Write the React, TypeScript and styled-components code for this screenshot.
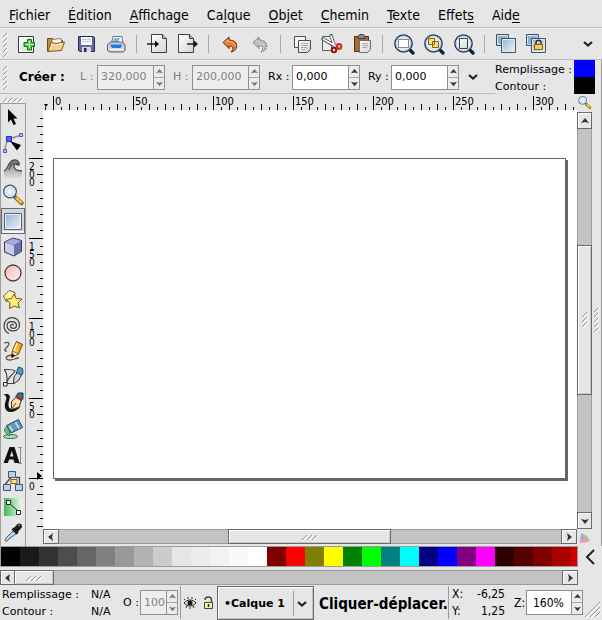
import React, { useLayoutEffect, useRef, useState } from "react";
import styled, { createGlobalStyle, css } from "styled-components";

const sans = `"DejaVu Sans", Verdana, sans-serif`;
const narrow = `"DejaVu Sans Condensed", "DejaVu Sans", sans-serif`;
const bg = "#e6e6e6";
const line = "#9c9c9c";
const soft = "#bcbcbc";

const Global = createGlobalStyle`
  *, *::before, *::after { box-sizing: border-box; }
  html, body { margin: 0; background: ${bg}; }
  body { font: 11px/16px ${sans}; color: #000; }
  button, input { font: inherit; color: inherit; margin: 0; padding: 0; border: 0; background: none; border-radius: 0; }
  svg { display: block; flex: none; }
`;

const Window = styled.div`
  display: flex;
  flex-direction: column;
  height: 100vh;
  min-height: 620px;
  overflow: hidden;
  background: ${bg};
`;

const MenuBar = styled.nav`
  display: flex;
  height: 28px;
  padding-top: 2px;
  border-bottom: 1px solid ${soft};
`;
const MenuItem = styled.button`
  padding: 0 9px;
  font: 14px/26px ${narrow};
  white-space: nowrap;
  u { text-underline-offset: 2px; }
`;

const CommandBar = styled.div`
  display: flex;
  align-items: center;
  height: 32px;
  border-top: 1px solid #f2f2f2;
  border-bottom: 1px solid ${soft};
`;
const Command = styled.button`
  display: flex;
  justify-content: center;
  width: 30px;
  height: 24px;
`;
const Divider = styled.span`
  width: 1px;
  height: 18px;
  margin: 0 6px 0 5px;
  background: #aaa;
`;
const Spacer = styled.span`
  flex: 1;
`;

const ControlRow = styled.div`
  display: flex;
  height: 34px;
`;
const ControlBar = styled.div`
  display: flex;
  align-items: center;
  flex: 1;
  min-width: 0;
  border-top: 1px solid #f2f2f2;
  border-bottom: 1px solid ${soft};
`;
const Heading = styled.strong`
  width: 61px;
  margin-left: 8px;
  font: bold 12px/16px ${sans};
`;
const Label = styled.label<{ $w: number; $dim?: boolean }>`
  width: ${(p) => p.$w}px;
  flex: none;
  color: ${(p) => (p.$dim ? "#808080" : "#000")};
  white-space: nowrap;
`;
const SpinFrame = styled.div<{ $w: number; $dim?: boolean }>`
  display: flex;
  flex: none;
  width: ${(p) => p.$w}px;
  height: 25px;
  border: 1px solid #8f8f8f;
  color: ${(p) => (p.$dim ? "#808080" : "#000")};
  background: ${(p) => (p.$dim ? "#eeeeee" : "#fff")};
`;
const SpinInput = styled.input<{ $narrow?: boolean }>`
  flex: 1;
  min-width: 0;
  padding-left: 3px;
  ${(p) => p.$narrow && css`font: 12px/16px ${narrow}; padding-left: 6px;`}
`;
const SpinButtons = styled.div`
  display: flex;
  flex-direction: column;
  width: 11px;
  border-left: 1px solid #8f8f8f;
  background: #ececec;
`;
const SpinButton = styled.button`
  display: flex;
  flex: 1;
  align-items: center;
  justify-content: center;
  & + & { border-top: 1px solid #a8a8a8; }
`;
const More = styled.button`
  display: flex;
  align-items: center;
  justify-content: center;
  width: 28px;
  height: 24px;
`;
const StylePanel = styled.div`
  display: flex;
  border-right: 1px solid ${line};
  padding-right: 6px;
`;
const StyleNames = styled.div`
  width: 79px;
  padding-top: 1px;
  line-height: 17px;
  white-space: nowrap;
`;
const StyleSwatches = styled.div`
  display: flex;
  flex-direction: column;
  width: 21px;
`;
const StyleSwatch = styled.button<{ $c: string }>`
  flex: 1;
  background: ${(p) => p.$c};
`;

const Main = styled.main`
  display: flex;
  flex: 1;
  min-height: 0;
`;
const Toolbox = styled.div`
  display: flex;
  flex-direction: column;
  flex: none;
  width: 26px;
`;
const ToolHandle = styled.div`
  height: 9px;
  padding: 3px 0 0 2px;
`;
const ToolList = styled.div`
  display: flex;
  flex-direction: column;
  flex: 1;
  border: 1px solid ${line};
  border-bottom: 0;
`;
const Tool = styled.button<{ $on?: boolean }>`
  display: flex;
  align-items: center;
  justify-content: center;
  flex: none;
  height: 26px;
  ${(p) => p.$on && css`
    background: #d4d4d4;
    box-shadow: inset 0 0 0 1px #6a6a6a, inset 0 -2px 0 1px #f6f6f6;
  `}
`;
const Workspace = styled.div`
  display: grid;
  flex: 1;
  min-width: 0;
  grid-template-columns: 17px minmax(0, 1fr) 15px;
  grid-template-rows: 16px minmax(0, 1fr) 17px;
`;
const Corner = styled.button`
  display: flex;
  align-items: center;
  justify-content: center;
`;
const RulerBox = styled.div`
  min-width: 0;
  min-height: 0;
  overflow: hidden;
  svg { width: 100%; height: 100%; }
`;
const RulerText = styled.text<{ $small?: boolean }>`
  font: ${(p) => (p.$small ? 10 : 11)}px ${narrow};
`;
const Canvas = styled.div`
  display: flex;
  padding: 48px 11px 50px 10px;
  background: #fff;
`;
const Page = styled.div`
  flex: 1;
  border: 1px solid #666;
  background: #fff;
  box-shadow: 2px 2px 0 #666;
`;
const Dock = styled.div`
  display: flex;
  align-items: center;
  justify-content: center;
  width: 10px;
  border-right: 1px solid ${line};
`;

const Track = styled.div<{ $v?: boolean }>`
  display: flex;
  flex-direction: ${(p) => (p.$v ? "column" : "row")};
  ${(p) => (p.$v ? "width: 15px; margin-top: 2px;" : "height: 15px;")}
  min-width: 0;
  border: 1px solid ${line};
  background: #c3c3c3;
`;
const TrackEnd = styled.button<{ $v?: boolean }>`
  display: flex;
  align-items: center;
  justify-content: center;
  flex: none;
  ${(p) => (p.$v ? "height: 15px;" : "width: 14px;")}
  background: ${bg};
  box-shadow: 0 0 0 1px #6a6a6a, inset 1px 1px 0 #fff;
`;
const Gap = styled.span<{ $n: number }>`
  flex: ${(p) => p.$n} 0 0;
`;
const Thumb = styled.button<{ $n: number }>`
  display: flex;
  align-items: center;
  justify-content: center;
  flex: ${(p) => p.$n} 0 0;
  background: ${bg};
  box-shadow: 0 0 0 1px #6a6a6a, inset 1px 1px 0 #fff, inset -1px -1px 0 #c9c9c9;
`;

const PaletteArea = styled.div`
  display: grid;
  flex: none;
  grid-template-columns: minmax(0, 1fr) 24px;
  row-gap: 3px;
`;
const Palette = styled.div`
  display: flex;
  height: 21px;
  overflow: hidden;
  border: 1px solid ${line};
`;
const Swatch = styled.button<{ $c: string }>`
  flex: none;
  width: 19px;
  background: ${(p) => p.$c};
`;

const Status = styled.footer`
  display: flex;
  align-items: center;
  flex: none;
  height: 35px;
`;
const StyleStatus = styled.dl`
  display: grid;
  grid-template-columns: 89px 32px;
  flex: none;
  margin: 0;
  padding: 1px 0 0 2px;
  line-height: 17px;
  white-space: nowrap;
  dd { margin: 0; }
`;
const StatusRule = styled.span`
  flex: none;
  width: 1px;
  height: 33px;
  background: ${line};
`;
const LayerIcons = styled.div`
  display: flex;
  align-items: center;
  flex: none;
  margin-left: 2px;
`;
const IconButton = styled.button`
  display: flex;
  align-items: center;
  justify-content: center;
  flex: none;
  width: 18px;
  height: 24px;
`;
const LayerButton = styled.button`
  display: flex;
  align-items: center;
  flex: none;
  width: 97px;
  height: 34px;
  padding: 2px 6px 0;
  border: 1px solid #6a6a6a;
  box-shadow: inset 1px 1px 0 #fff, inset -1px -1px 0 #c0c0c0;
  font: bold 11px/16px ${sans};
  white-space: nowrap;
`;
const LayerRule = styled.span`
  width: 1px;
  height: 25px;
  margin: 0 3px 0 auto;
  background: ${line};
`;
const Message = styled.div`
  flex: 1;
  min-width: 0;
  padding-top: 2px;
  margin-left: 5px;
  overflow: hidden;
  font: bold 15px/24px ${narrow};
  white-space: nowrap;
`;
const Coords = styled.dl`
  display: grid;
  grid-template-columns: 17px 36px;
  flex: none;
  margin: 0 9px 0 3px;
  font: 12px/17px ${narrow};
  dd { margin: 0; text-align: right; }
`;
const ZoomLabel = styled.label`
  width: 12px;
  flex: none;
  font: 12px/16px ${narrow};
`;
const Grip = styled.div`
  display: flex;
  align-self: flex-end;
  justify-content: flex-end;
  width: 19px;
  padding: 0 1px 2px 0;
`;

const Defs = styled.svg`
  width: 0;
  height: 0;
`;

function Gradients() {
  return (
    <Defs aria-hidden="true">
      <defs>
        <linearGradient id="blue" x1="0" y1="0" x2="1" y2="1"><stop stopColor="#8fb0d0" /><stop offset="1" stopColor="#f1f7fd" /></linearGradient>
        <linearGradient id="paper" x1="0" y1="0" x2="1" y2="1"><stop stopColor="#fff" /><stop offset="1" stopColor="#d3d5d0" /></linearGradient>
        <linearGradient id="pink" x1="0" y1="0" x2="1" y2="1"><stop stopColor="#ffb3bb" /><stop offset="1" stopColor="#fff2f3" /></linearGradient>
        <linearGradient id="green" x1="0" y1="0" x2="1" y2="0"><stop stopColor="#43b75b" /><stop offset="1" stopColor="#eefaf0" /></linearGradient>
        <linearGradient id="gold" x1="0" y1="0" x2="1" y2="0"><stop stopColor="#fff06a" /><stop offset="1" stopColor="#e88a00" /></linearGradient>
        <linearGradient id="wave" x1="0" y1="0" x2="0" y2="1"><stop stopColor="#777" /><stop offset="1" stopColor="#ddd" /></linearGradient>
        <radialGradient id="glass"><stop stopColor="#fff" /><stop offset="1" stopColor="#a9cbee" /></radialGradient>
      </defs>
    </Defs>
  );
}

const lens = (
  <>
    <path d="M17 17l4 4" stroke="#15202c" strokeWidth="3.4" strokeLinecap="round" />
    <circle cx="11.5" cy="11.5" r="8.6" fill="#dcebfa" stroke="#25384c" strokeWidth="1.5" />
    <circle cx="11.5" cy="11.5" r="7.4" stroke="#b3cfea" />
  </>
);
const squares = (
  <>
    <path d="M2.5 2.500h12v11h-12z" fill="#8fb0d0" stroke="#3e5268" />
    <path d="M3.5 3.500h10v9h-10z" stroke="#d7e6f4" />
    <path d="M7.5 6.500h14v14h-14z" fill="url(#blue)" stroke="#3e5268" />
    <path d="M8.5 7.500h12v12h-12z" stroke="#dcebf8" />
  </>
);
const magnifier = (
  <>
    <path d="M14 14l6.5 6" stroke="#8a6010" strokeWidth="4.4" strokeLinecap="round" />
    <path d="M14.5 14l5.5 5.3" stroke="#ffc331" strokeWidth="2.6" strokeLinecap="round" />
    <path d="M13 13l2 2" stroke="#687380" strokeWidth="3" />
    <circle cx="9" cy="8.5" r="6.3" fill="url(#glass)" stroke="#4b5b6d" strokeWidth="1.4" />
    <circle cx="9" cy="8.5" r="5" stroke="#f4faff" />
  </>
);
const backArrow = "M5 10.5l6-5.5v3c5 0 8.500 3 7.500 7-.5 2.500-2.500 4.500-5.500 5 3-3.500 2.500-6-2-6v2.500z";

const art: Record<string, React.ReactNode> = {
  new: (
    <>
      <path d="M4.5 4.500h15v16h-15z" fill="url(#paper)" stroke="#35383a" />
      <path d="M5.5 5.500h13v14h-13z" stroke="#fff" />
      <path d="M13.5 7.500h4v3h3v4h-3v3.500h-4v-3.500h-3.500v-4h3.500z" fill="#5ccf54" stroke="#167321" strokeLinejoin="round" />
      <path d="M15.5 9v7M12 12.500h7" stroke="#c4f5b5" />
    </>
  ),
  open: (
    <>
      <path d="M3.5 19.500v-13h5l2 2h8v3" fill="#b98d4c" stroke="#6e4c1d" />
      <path d="M8 7.500l9-1 1 5H8z" fill="#f6f3ec" stroke="#8e7d60" />
      <path d="M4 19.500l3-9 5 1 8.500-1.500-3 8.500z" fill="#f2cd90" stroke="#7e5923" strokeLinejoin="round" />
      <path d="M6 18l2-6 4 .8 7-1" stroke="#fff0cc" />
    </>
  ),
  save: (
    <>
      <path d="M4.5 4.500h15l1 1v14h-15l-1-1z" fill="#6569a8" stroke="#252955" />
      <path d="M7 5h11v8H7z" fill="#f6f7fa" />
      <path d="M8 7.500h9M8 9.500h9" stroke="#c5c7d2" />
      <path d="M8 15h9v5H8z" fill="#d7d8dc" />
      <path d="M10 16h2.500v4H10z" fill="#252955" />
    </>
  ),
  print: (
    <>
      <path d="M7.5 12L9 4.500h9l1 7.500z" fill="#fff" stroke="#737780" />
      <path d="M10 6l6 0-2 5H9z" fill="#78b3f0" />
      <path d="M3.5 12.500l3-2.500h11l3.500 2.500v6l-2 1.500h-13l-2.500-1.500z" fill="#cfd1d6" stroke="#5b5e66" />
      <path d="M6 12.500h12.500l-2 3.500H8z" fill="#1e7be0" />
      <path d="M5 17.500h15" stroke="#f6f6f8" strokeWidth="1.5" />
    </>
  ),
  import: (
    <>
      <path d="M5.5 2.500h11l4 4v14h-15z" fill="url(#paper)" stroke="#3d3f3e" />
      <path d="M16.5 2.500v4h4" fill="#bbb" stroke="#3d3f3e" />
      <path d="M1 12h9" stroke="#111" strokeWidth="1.4" /><path d="M9 8.500l4 3.500-4 3.500z" fill="#111" />
    </>
  ),
  export: (
    <>
      <path d="M2.5 2.500h11l4 4v14h-15z" fill="url(#paper)" stroke="#3d3f3e" />
      <path d="M13.5 2.500v4h4" fill="#bbb" stroke="#3d3f3e" />
      <path d="M11 12h9" stroke="#111" strokeWidth="1.4" /><path d="M18 8.500l4 3.500-4 3.500z" fill="#111" />
    </>
  ),
  undo: (
    <>
      <path d={backArrow} fill="#f17b31" stroke="#6b2405" strokeLinejoin="round" />
      <path d="M7 10.500l3-2.700v1.500c4 0 7 2 7.500 5" stroke="#ffb98a" />
    </>
  ),
  redo: (
    <>
      <path d={backArrow} fill="#b9bec3" stroke="#5d646b" strokeDasharray="2 1" />
      <path d="M8 9l8 8M11 8l6 6" stroke="#eef1f4" strokeDasharray="1 1" />
    </>
  ),
  duplicate: (
    <>
      <path d="M4.5 4.500h11v11h-11z" fill="#f5f5f3" stroke="#4b4d4b" />
      <path d="M8.5 8.500h12v9l-3 3h-9z" fill="url(#paper)" stroke="#4b4d4b" />
      <path d="M11 11.500h7M11 13.500h7M11 15.500h6M11 17.500h4" stroke="#a9aba9" />
    </>
  ),
  cut: (
    <>
      <path d="M2.5 4.500h9v14h-9z" fill="#ecece9" stroke="#5d5e5c" />
      <path d="M11 3.500l3.500 11M3 7l14 8" stroke="#4a4d50" strokeWidth="3.4" strokeLinecap="round" />
      <path d="M11 4l3.500 10M3.500 7.300l13 7.200" stroke="#fafbfc" strokeWidth="1.8" strokeLinecap="round" />
      <circle cx="14" cy="18" r="2.2" stroke="#8e170f" strokeWidth="2" />
      <circle cx="19" cy="14.5" r="2.3" stroke="#c9341a" strokeWidth="2.2" />
    </>
  ),
  paste: (
    <>
      <path d="M4.5 4.500h14v15h-14z" fill="#ab6c25" stroke="#593108" />
      <path d="M8 6.500V4l2-1.500h3L15 4v2.500z" fill="#8b8f93" stroke="#393c3f" />
      <path d="M9.5 8.500h11v9l-3 3h-8z" fill="url(#paper)" stroke="#6c6e6b" />
      <path d="M12 11.500h6M12 13.500h6M12 15.500h5" stroke="#a9aba9" />
    </>
  ),
  zoomSel: <>{lens}<path d="M6.5 7.500h10v8h-10z" fill="#fff" stroke="#222" strokeDasharray="1 1" /></>,
  zoomDraw: <>{lens}<path d="M6.5 6.500h6v6h-6zM10.500 9.500h6v6h-6z" fill="#ffe071" stroke="#85620e" /></>,
  zoomPage: <>{lens}<path d="M7.5 6.500h8v10h-8z" fill="url(#paper)" stroke="#3c3f42" /></>,
  clone: squares,
  unlink: (
    <>
      {squares}
      <path d="M12 13v-2.500c0-3 5-3 5 0V13" stroke="#333" strokeWidth="1.5" />
      <path d="M10.5 12.500h8v5h-8z" fill="#ffd04b" stroke="#7e5b0c" />
    </>
  ),
  select: <path d="M7 4v13.500l3-3 2.500 5.500 2.500-1-2.500-5.500h4z" fill="#000" />,
  node: (
    <>
      <path d="M4 20c0-8 2-13 16-15.500" stroke="#8a8a8a" strokeWidth="1.3" />
      <path d="M5.5 5.500h5v5h-5z" fill="#5959ff" stroke="#2929d0" />
      <path d="M18.5 2.500h3v3h-3zM2.500 18.500h3v3h-3z" fill="#c2c2ff" stroke="#4c4ce0" />
      <path d="M9 10l11 4-4 5.500z" fill="#000" />
    </>
  ),
  tweak: (
    <>
      <path d="M3 14c4 0 3-10 10-11 4-.5 6 3 5 5-2-3-5-1-5 1 0 3 3 5 8 5v7H3z" fill="url(#wave)" />
      <path d="M3 14c4-1 4-10 10-11 4-.5 6 3 5 5-2-3-5-1-5 1 0 3 3 5 8 5M8 13c1-4 2-6 5-7M15 7c1 1 2 1 3 1" stroke="#4a4a4a" strokeWidth="1.3" />
    </>
  ),
  zoom: magnifier,
  rect: (
    <>
      <path d="M3.5 4.500h17v16h-17z" fill="url(#blue)" stroke="#52657a" />
      <path d="M4.5 5.500h15v14h-15z" stroke="#e5f0fa" />
    </>
  ),
  box: (
    <>
      <path d="M3.5 7L12 3l8.500 2.500v11L13 21l-9.500-4z" fill="#777bb8" stroke="#343862" strokeLinejoin="round" />
      <path d="M4 7l8-3.500 8 2.500-7 4z" fill="#a9acd8" /><path d="M13 10l7-4v10.500l-7 4z" fill="#6c70ae" />
      <path d="M4 7.500l9 3v10l-9-4z" fill="#c9caec" />
    </>
  ),
  circle: <circle cx="12" cy="12" r="8" fill="url(#pink)" stroke="#493f41" strokeWidth="1.3" />,
  star: (
    <>
      <path d="M2.5 9l5.500-5.500 6 2L13.500 13 5 14.500z" fill="#fff6a8" stroke="#6c6228" />
      <path d="M13 7l2 4.500 6 .5-4 4 1.500 5-5-2-5 2.500.5-5.500-4-3.500 5.500-1z" fill="#ffef74" stroke="#6c5c17" strokeLinejoin="round" />
    </>
  ),
  spiral: <path d="M12.5 12.500c0-2-3-1.500-3 .5 0 3 6 3.500 6-.5 0-5-9-5.500-9.500 0-.5 7 12 7.500 12.500 0C19 2 3.500 2 3 12.500 3 17 5.500 19.500 8 20.500" stroke="#3d3d3d" strokeWidth="1.2" />,
  pencil: (
    <>
      <path d="M3 4c6-2 6 1 3 4s-3 4 0 4M11 16c-8 1-7 5-2 5 4 0 5-2 9-2" stroke="#555" strokeWidth="1.3" />
      <path d="M11.5 11.500L15.500 2.500l6 3-4 9.500-7 3.500z" fill="url(#gold)" stroke="#6d4a0c" strokeLinejoin="round" />
      <path d="M11.5 12l6 3-7 3.500z" fill="#f9dfae" stroke="#6d4a0c" strokeWidth=".7" />
      <path d="M16 4.500l-3 7" stroke="#fffbc4" strokeWidth="1.4" /><path d="M10.5 18.500l.5-4 3 2z" fill="#000" />
    </>
  ),
  pen: (
    <>
      <path d="M3 4.500h4c3 0 6 .5 7 1.500-3 5-8 6-8 13M3 4.500c4 3 3 10 3 14h6" stroke="#444" strokeWidth="1.2" />
      <path d="M12.5 19l.5-7 3.500-5 4.500 2-3 6z" fill="#d3d7da" stroke="#333" strokeLinejoin="round" />
      <path d="M15.5 7.500l2-5.500 4 1.500.5 5-2 1.500z" fill="#4f9cc9" stroke="#20465e" strokeLinejoin="round" />
      <path d="M2.5 17.500h3.500v3.500H2.500z" fill="#fff" stroke="#222" />
    </>
  ),
  calligraphy: (
    <>
      <path d="M2 4c4-2 8-1 6.500 4-2 6-1 10 2.500 10 3 0 6-1 9-3-3 4-7 6-11 6-6-1-6-7-4-12 1-3 0-5-3-5z" fill="#111" />
      <path d="M10.5 18.500l0-8 4.500-4 5.500 2.500-2.500 7z" fill="#ffe6ae" stroke="#50380c" strokeLinejoin="round" /><path d="M10.5 18l4.500-6" stroke="#50380c" />
      <path d="M15 6l2-4h5l0 6-2 1.500z" fill="#3d6f91" stroke="#1e2f3c" /><path d="M14.5 5.500l6 3" stroke="#c52c20" strokeWidth="1.8" />
    </>
  ),
  bucket: (
    <>
      <ellipse cx="9.5" cy="19.5" rx="7" ry="2" fill="#a9e5b9" stroke="#28693a" />
      <path d="M6 9c-2.500 2-3 4-2 6 .5 1 2 1 2.500 3l2 1c.5-3-.5-5-.5-8z" fill="#63c07b" stroke="#28693a" strokeWidth=".7" />
      <path d="M5.5 8.500l12-6 4 8-11.500 5.500z" fill="#5f9cbf" stroke="#274b60" strokeLinejoin="round" />
      <path d="M8.5 9l3 5M14.500 5.500l3.500 6" stroke="#c6e4f2" strokeWidth="1.5" />
    </>
  ),
  text: (
    <>
      <path d="M2.5 20L8.500 4h5l5 16h-5l-1-3.500H8L7 20zM9 13.500h3.500L10.800 8z" fill="#111" />
      <path d="M17 4.500h4M17 20.500h4M19.500 4.500v16" stroke="#8a8a8a" />
    </>
  ),
  connector: (
    <>
      <path d="M10 8.500l-6 7M15 8.500h3.500v7" stroke="#444" strokeWidth="1.3" />
      <path d="M7.5 2.500h7v6h-7zM2.500 15.500h7v6h-7zM14.500 15.500h7v6h-7z" fill="#b9d1ea" stroke="#42556a" />
      <path d="M10 10.500h6v4h-6z" fill="#ffe07b" stroke="#7c5e14" />
    </>
  ),
  gradient: (
    <>
      <path d="M3 3h18v18H3z" fill="url(#green)" />
      <path d="M8 8l9 8" stroke="#222" />
      <path d="M5.5 5.500h4v4h-4zM15.500 15.500h4v4h-4z" fill="#f7fff8" stroke="#222" />
    </>
  ),
  dropper: (
    <>
      <path d="M6 20c-2 1-2.500-1-1-3l8-8 3 3-8 6z" fill="#b6d2ea" stroke="#44576a" />
      <path d="M12 7l2-1 2-2.500c3-3 7 1 4 4L17.500 10l-.5 2.500-1.500 1-5-5z" fill="#14181c" />
      <path d="M17 5l2-1" stroke="#aaa" />
    </>
  ),
};

function Icon({ name, size = 24 }: { name: string; size?: number }) {
  return (
    <svg width={size} height={size} viewBox="0 0 24 24" fill="none" aria-hidden="true">
      {art[name]}
    </svg>
  );
}

const arrows = {
  up: "M0 6l4-5 4 5-4-1z",
  down: "M0 2l4 5 4-5-4 1z",
  left: "M6 0L1 4l5 4-1-4z",
  right: "M2 0l5 4-5 4 1-4z",
};
function Arrow({ to, color = "#333", size = 8 }: { to: keyof typeof arrows; color?: string; size?: number }) {
  return (
    <svg width={size} height={size} viewBox="0 0 8 8" aria-hidden="true">
      <path d={arrows[to]} fill={color} />
    </svg>
  );
}
function Chevron() {
  return (
    <svg width="10" height="8" viewBox="0 0 10 8" fill="none" aria-hidden="true">
      <path d="M1 2l4 3.500L9 2" stroke="#222" strokeWidth="2.2" />
    </svg>
  );
}
function Hatch({ w, h, marks }: { w: number; h: number; marks: [number, number, number][] }) {
  return (
    <svg width={w} height={h} viewBox={`0 0 ${w} ${h}`} fill="none" aria-hidden="true">
      {marks.map(([x, y, n]) => (
        <g key={`${x}-${y}`}>
          <path d={`M${x + 1} ${y + 1}l${n} ${-n}`} stroke="#fff" />
          <path d={`M${x} ${y}l${n} ${-n}`} stroke="#949494" />
        </g>
      ))}
    </svg>
  );
}
const BarHandle = () => <Hatch w={11} h={25} marks={[5, 10, 15, 20, 25].map((y) => [3, y, 4])} />;

function SpinBox({ id, value, width, dim, condensed }: { id: string; value: string; width: number; dim?: boolean; condensed?: boolean }) {
  const [text, setText] = useState(value);
  const color = dim ? "#777" : "#333";
  return (
    <SpinFrame $w={width} $dim={dim}>
      <SpinInput id={id} value={text} disabled={dim} $narrow={condensed} onChange={(e) => setText(e.target.value)} />
      <SpinButtons>
        <SpinButton aria-label="Augmenter" disabled={dim}><Arrow to="up" size={7} color={color} /></SpinButton>
        <SpinButton aria-label="Diminuer" disabled={dim}><Arrow to="down" size={7} color={color} /></SpinButton>
      </SpinButtons>
    </SpinFrame>
  );
}

function Ruler({ vertical }: { vertical?: boolean }) {
  const ref = useRef<HTMLDivElement>(null);
  const [extent, setExtent] = useState(0);
  useLayoutEffect(() => {
    const el = ref.current!;
    const measure = () => setExtent(vertical ? el.clientHeight : el.clientWidth);
    measure();
    const observer = new ResizeObserver(measure);
    observer.observe(el);
    return () => observer.disconnect();
  }, [vertical]);

  const origin = vertical ? extent - 51 : 10;
  const first = -Math.floor((origin - 1) / 8);
  const last = Math.floor((extent - 1 - origin) / 8);
  const steps = extent ? Array.from({ length: last - first + 1 }, (_, i) => first + i) : [];
  return (
    <RulerBox ref={ref}>
      <svg fill="none" aria-hidden="true">
        {steps.map((n) => {
          const at = origin + n * 8;
          const major = n % 10 === 0;
          const len = major ? 14 : n % 2 === 0 ? 6 : 3;
          const label = String(Math.abs(n) * 5);
          return vertical ? (
            <g key={n}>
              <path d={`M17 ${at + 0.5}h${-len}`} stroke="#000" />
              {major && label.split("").map((c, i) => <RulerText $small key={i} x="3" y={at + 12 + i * 8} fill="#000">{c}</RulerText>)}
            </g>
          ) : (
            <g key={n}>
              <path d={`M${at + 0.5} 16v${-len}`} stroke="#000" />
              {major && <RulerText x={at + 2} y="11" fill="#000">{label}</RulerText>}
            </g>
          );
        })}
        {vertical ? <path d={`M11 ${origin - 6}v8l5-4z`} fill="#000" /> : <path d="M1 10h4l-2 3z" fill="#000" />}
      </svg>
    </RulerBox>
  );
}

function ScrollBar({ vertical, parts }: { vertical?: boolean; parts: [number, number, number] }) {
  return (
    <Track $v={vertical}>
      <TrackEnd $v={vertical} aria-label="Reculer"><Arrow to={vertical ? "up" : "left"} /></TrackEnd>
      <Gap $n={parts[0]} />
      <Thumb $n={parts[1]} aria-label="Position">
        {vertical
          ? <Hatch w={8} h={18} marks={[[1, 6, 5], [1, 11, 5], [1, 16, 5]]} />
          : <Hatch w={18} h={8} marks={[[1, 7, 5], [6, 7, 5], [11, 7, 5]]} />}
      </Thumb>
      <Gap $n={parts[2]} />
      <TrackEnd $v={vertical} aria-label="Avancer"><Arrow to={vertical ? "down" : "right"} /></TrackEnd>
    </Track>
  );
}

const menus: [string, string, string][] = [
  ["", "F", "ichier"], ["", "É", "dition"], ["", "A", "ffichage"], ["Ca", "l", "que"], ["", "O", "bjet"],
  ["", "C", "hemin"], ["", "T", "exte"], ["Effet", "s", ""], ["Aid", "e", ""],
];
const commands: [string, string][][] = [
  [["new", "Nouveau"], ["open", "Ouvrir"], ["save", "Enregistrer"], ["print", "Imprimer"]],
  [["import", "Importer"], ["export", "Exporter"]],
  [["undo", "Annuler"], ["redo", "Rétablir"]],
  [["duplicate", "Copier"], ["cut", "Couper"], ["paste", "Coller"]],
  [["zoomSel", "Zoom sélection"], ["zoomDraw", "Zoom dessin"], ["zoomPage", "Zoom page"]],
  [["clone", "Dupliquer"], ["unlink", "Cloner"]],
];
const tools: [string, string][] = [
  ["select", "Sélecteur"], ["node", "Nœuds"], ["tweak", "Ajuster"], ["zoom", "Zoom"], ["rect", "Rectangle"],
  ["box", "Boîte 3D"], ["circle", "Ellipse"], ["star", "Étoile"], ["spiral", "Spirale"], ["pencil", "Crayon"],
  ["pen", "Plume"], ["calligraphy", "Calligraphie"], ["bucket", "Remplir"], ["text", "Texte"],
  ["connector", "Connecteur"], ["gradient", "Dégradé"], ["dropper", "Pipette"],
];
const palette = [
  "#000000", "#1a1a1a", "#333333", "#4d4d4d", "#666666", "#808080", "#999999", "#b3b3b3", "#cccccc", "#e6e6e6",
  "#ececec", "#f2f2f2", "#f9f9f9", "#ffffff", "#800000", "#ff0000", "#808000", "#ffff00", "#008000", "#00ff00",
  "#008080", "#00ffff", "#000080", "#0000ff", "#800080", "#ff00ff", "#2b0000", "#550000", "#800000", "#aa0000",
  "#d40000",
];

export default function App() {
  const [tool, setTool] = useState("rect");
  return (
    <Window>
      <Global />
      <Gradients />
      <MenuBar>
        {menus.map(([a, b, c]) => (
          <MenuItem key={a + b + c}>{a}<u>{b}</u>{c}</MenuItem>
        ))}
      </MenuBar>
      <CommandBar>
        <BarHandle />
        {commands.map((group, i) => (
          <React.Fragment key={i}>
            {i > 0 && <Divider />}
            {group.map(([id, label]) => (
              <Command key={id} aria-label={label}><Icon name={id} /></Command>
            ))}
          </React.Fragment>
        ))}
        <Spacer />
        <More aria-label="Plus de commandes"><Chevron /></More>
      </CommandBar>
      <ControlRow>
        <ControlBar>
          <BarHandle />
          <Heading>Créer :</Heading>
          <Label htmlFor="w" $w={17} $dim>L :</Label>
          <SpinBox id="w" value="320,000" width={68} dim />
          <Spacer />
          <Label htmlFor="h" $w={19} $dim>H :</Label>
          <SpinBox id="h" value="200,000" width={68} dim />
          <Spacer />
          <Label htmlFor="rx" $w={24}>Rx :</Label>
          <SpinBox id="rx" value="0,000" width={68} />
          <Spacer />
          <Label htmlFor="ry" $w={23}>Ry :</Label>
          <SpinBox id="ry" value="0,000" width={68} />
          <More aria-label="Plus d’options"><Chevron /></More>
          <Spacer />
        </ControlBar>
        <StylePanel>
          <StyleNames>
            <div>Remplissage :</div>
            <div>Contour :</div>
          </StyleNames>
          <StyleSwatches>
            <StyleSwatch $c="#0000ff" aria-label="Remplissage" />
            <StyleSwatch $c="#000000" aria-label="Contour" />
          </StyleSwatches>
        </StylePanel>
      </ControlRow>
      <Main>
        <Toolbox>
          <ToolHandle><Hatch w={22} h={6} marks={[[1, 5, 4], [6, 5, 4], [11, 5, 4], [16, 5, 4]]} /></ToolHandle>
          <ToolList>
            {tools.map(([id, label]) => (
              <Tool key={id} $on={tool === id} aria-label={label} onClick={() => setTool(id)}><Icon name={id} /></Tool>
            ))}
          </ToolList>
        </Toolbox>
        <Workspace>
          <span />
          <Ruler />
          <Corner aria-label="Zoom fenêtre"><Icon name="zoom" size={15} /></Corner>
          <Ruler vertical />
          <Canvas><Page /></Canvas>
          <ScrollBar vertical parts={[119, 148, 120]} />
          <span />
          <ScrollBar parts={[171, 161, 172]} />
          <Corner aria-label="Gestion des couleurs">
            <svg width="12" height="12" viewBox="0 0 12 12" aria-hidden="true">
              <path d="M2 1c4 1 8 4 9 8L4 6z" fill="#82df86" /><path d="M2 1L1 11l5-4z" fill="#a3a4f0" /><path d="M1 11c4 0 8-1 10-2L5 5z" fill="#f09aab" />
            </svg>
          </Corner>
        </Workspace>
        <Dock><Hatch w={7} h={26} marks={[[1, 5, 4], [1, 10, 4], [1, 15, 4], [1, 20, 4], [1, 25, 4]]} /></Dock>
      </Main>
      <PaletteArea>
        <Palette>
          {palette.map((c, i) => <Swatch key={i} $c={c} aria-label={c} />)}
        </Palette>
        <Corner aria-label="Menu de la palette">
          <svg width="10" height="16" viewBox="0 0 10 16" fill="none" aria-hidden="true"><path d="M9 1L2 8l7 7" stroke="#222" strokeWidth="2" /></svg>
        </Corner>
        <ScrollBar parts={[0, 38, 509]} />
      </PaletteArea>
      <Status>
        <StyleStatus>
          <dt>Remplissage :</dt><dd>N/A</dd>
          <dt>Contour :</dt><dd>N/A</dd>
        </StyleStatus>
        <Label htmlFor="opacity" $w={17}>O :</Label>
        <SpinBox id="opacity" value="100" width={38} dim />
        <LayerIcons>
          <StatusRule />
          <IconButton aria-label="Visibilité du calque">
            <svg width="14" height="12" viewBox="0 0 14 12" fill="none" aria-hidden="true">
              <path d="M1 6c3-4 9-4 12 0-3 4-9 4-12 0z" fill="#ddd" stroke="#222" /><circle cx="7" cy="6" r="2.5" fill="#111" />
              <path d="M2 3L1 2M5 2V0M9 2V0M12 3l1-1M4 9l-1 2M10 9l1 2M7 10v2" stroke="#333" />
            </svg>
          </IconButton>
          <IconButton aria-label="Verrouiller le calque">
            <svg width="12" height="14" viewBox="0 0 12 14" fill="none" aria-hidden="true">
              <path d="M3 4c0-4 6.500-4 6.500 0v3" stroke="#444" strokeWidth="1.4" /><path d="M2.5 6.500h8v6h-8z" fill="#fff3a6" stroke="#444" /><path d="M6.5 8v3" stroke="#222" strokeWidth="1.5" />
            </svg>
          </IconButton>
        </LayerIcons>
        <LayerButton>•Calque 1<LayerRule /><Chevron /></LayerButton>
        <Message>Cliquer-déplacer.</Message>
        <StatusRule />
        <Coords>
          <dt>X:</dt><dd>-6,25</dd>
          <dt>Y:</dt><dd>1,25</dd>
        </Coords>
        <ZoomLabel htmlFor="zoom">Z:</ZoomLabel>
        <SpinBox id="zoom" value="160%" width={57} condensed />
        <Grip><Hatch w={17} h={17} marks={[[1, 16, 15], [6, 16, 10], [11, 16, 5]]} /></Grip>
      </Status>
    </Window>
  );
}
